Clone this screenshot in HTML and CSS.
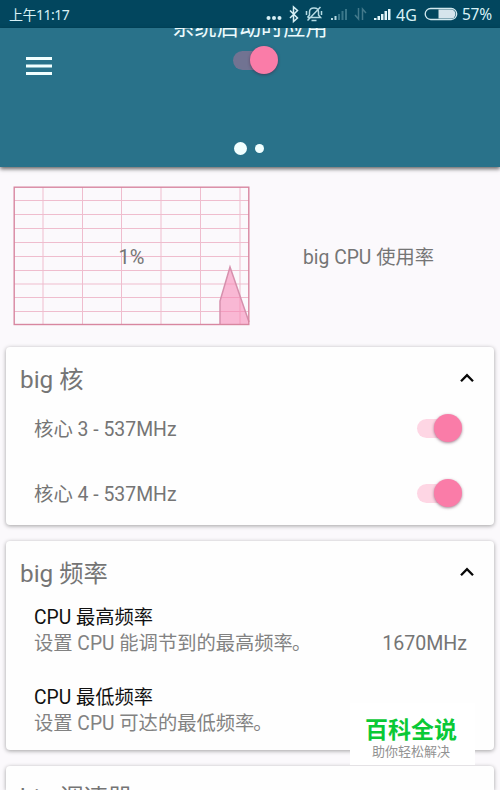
FILE: index.html
```html
<!DOCTYPE html>
<html lang="zh-CN">
<head>
<meta charset="utf-8">
<title>big CPU</title>
<link rel="stylesheet" href="styles.css">
</head>
<body>
<div class="statusbar">
  <span class="time">上午11:17</span>
  <svg class="status-icons" width="130" height="28" viewBox="264 0 130 28">
    <g fill="#d6eff5"><circle cx="268.5" cy="18" r="2"/><circle cx="274" cy="18" r="2"/><circle cx="279.500" cy="18" r="2"/></g>
    <path d="M290 10.500l7.500 7.500-4 3.500V7l4 3.500-7.500 7.500" fill="none" stroke="#d6eff5" stroke-width="1.500"/>
    <g fill="none" stroke="#b5dae3" stroke-width="1.500"><path d="M307.500 17.500h13l-2-2.500v-3q0-4-4.500-4t-4.500 4v3l-2 2.500M311.500 20.500h5M320.500 7l-13 13.500M306.500 11v4M321.500 11v4"/></g>
    <path d="M331 20v-2h2v2zM334.500 20v-4h2v4z" fill="#b5d8e1"/>
    <path d="M338 20v-6h2v6zM341.500 20v-9h2v9zM345 20V9h2v11z" fill="#39778a"/>
    <path d="M358.500 8v11l-3.500-4M362.500 20V9l3.500 4" fill="none" stroke="#42798b" stroke-width="1.500"/>
    <path d="M374 20v-2h2.500v2zM377.500 20v-4h2.500v4zM381 20v-6h2.500v6zM384.500 20v-9h2.500v9zM388 20V9h2.500v11z" fill="#e3f6fa"/>
  </svg>
  <span class="network">4G</span>
  <svg class="battery" width="34" height="14" viewBox="0 0 34 14"><rect x="1.200" y="1.500" width="31.500" height="11" rx="5.500" fill="none" stroke="#d2e9ef" stroke-width="1.300"/><path d="M14.500 2.500h12.500a4.500 4.500 0 0 1 0 9H14.500z" fill="#d6e5ec"/></svg>
  <span class="percent">57%</span>
</div>
<header class="hero">
  <svg class="menu" width="28" height="20" viewBox="0 0 28 20"><path d="M1 2.500h26M1 10h26M1 17.500h26" stroke="#f2ffff" stroke-width="2.800"/></svg>
  <div class="hero-center">
    <div class="hero-title">系统启动时应用</div>
    <span class="switch hero-switch"></span>
    <div class="pager"><i class="dot active"></i><i class="dot"></i></div>
  </div>
</header>
<main>
  <section class="usage">
    <div class="chart">
      <svg width="237" height="140" viewBox="0 0 237 140">
        <path d="M1 14.500h235M1 28.500h235M1 42.500h235M1 56.500h235M1 70.500h235M1 84.500h235M1 98h235M1 111.500h235M1 125.500h235M30 1v137M69.500 1v137M108.500 1v137M148 1v137M187.500 1v137M227 1v137" fill="none" stroke="#efbdce" stroke-width="1"/>
        <path d="M207 138.500V115L217 81l19 55v2.500z" fill="#f884b2" fill-opacity=".55"/>
        <path d="M207 138.500V115L217 81l19 55" fill="none" stroke="#d690ad" stroke-width="1.500"/>
        <rect x="1.200" y="1.200" width="234.600" height="137.300" fill="none" stroke="#d886a0" stroke-width="1.400"/>
      </svg>
      <span class="chart-value">1%</span>
    </div>
    <div class="usage-label">big CPU 使用率</div>
  </section>
  <section class="card cores">
    <div class="card-head"><h2>big 核</h2><svg class="chevron" width="16" height="10" viewBox="0 0 16 10"><path d="M2 8.200l6-6 6 6" fill="none" stroke="#080808" stroke-width="2.300"/></svg></div>
    <div class="core"><span class="core-name">核心 3 - 537MHz</span><span class="switch"></span></div>
    <div class="core"><span class="core-name">核心 4 - 537MHz</span><span class="switch"></span></div>
  </section>
  <section class="card freq">
    <div class="card-head"><h2>big 频率</h2><svg class="chevron" width="16" height="10" viewBox="0 0 16 10"><path d="M2 8.200l6-6 6 6" fill="none" stroke="#080808" stroke-width="2.300"/></svg></div>
    <div class="setting"><div class="name">CPU 最高频率</div><div class="detail"><span>设置 CPU 能调节到的最高频率<span class="stop">。</span></span><span class="value">1670MHz</span></div></div>
    <div class="setting"><div class="name">CPU 最低频率</div><div class="detail"><span>设置 CPU 可达的最低频率<span class="stop">。</span></span></div></div>
  </section>
  <section class="card governor">
    <div class="card-head"><h2>big 调速器</h2></div>
  </section>
</main>
<div class="badge"><strong>百科全说</strong><span>助你轻松解决</span></div>
</body>
</html>
```

FILE: styles.css
```css
* { box-sizing: border-box; }
body {
  position: relative;
  margin: 0;
  width: 500px;
  height: 790px;
  overflow: hidden;
  background: #fbf9fc;
  color: #757575;
  font: 19.3px/26px Roboto, "Noto Sans CJK SC", sans-serif;
  white-space: nowrap;
}
.statusbar {
  display: flex;
  align-items: center;
  height: 28px;
  padding: 0 8px 0 9px;
  background: #02465e;
  color: #d8f1f6;
  font: 14.5px/28px "Noto Sans", "Noto Sans CJK SC", sans-serif;
}
.time { flex: 1; padding-top: 1px; font-size: 14px; letter-spacing: -.5px; }
.status-icons { flex: none; }
.network { width: 22px; margin-left: 2px; padding-top: 1px; font-size: 16px; }
.battery { flex: none; margin: 0 4px 0 6px; }
.percent { width: 30px; font-size: 15.5px; letter-spacing: -.3px; }
.hero {
  position: relative;
  display: flex;
  height: 139px;
  padding-left: 25px;
  background: #29728a;
  box-shadow: 0 2px 4px rgba(0, 0, 0, .6);
}
.menu { flex: none; margin-top: 28px; }
.hero-center {
  display: flex;
  flex-direction: column;
  align-items: center;
  width: 394px;
  height: 139px;
  overflow: hidden;
}
.hero-title {
  flex: none;
  height: 22px;
  margin-top: -13px;
  color: #edfbfd;
  font-size: 22.2px;
  line-height: 24px;
}
.switch {
  position: relative;
  flex: none;
  width: 45px;
  height: 28px;
}
.switch::before {
  content: "";
  position: absolute;
  left: 0;
  top: 5px;
  width: 34px;
  height: 19px;
  border-radius: 10px;
  background: #fed6e4;
}
.switch::after {
  content: "";
  position: absolute;
  right: 0;
  top: 0;
  width: 28px;
  height: 28px;
  border-radius: 50%;
  background: #fa7ca8;
  box-shadow: 0 1px 3px rgba(80, 20, 50, .5);
}
.hero-switch { margin: 9px 0 0 11px; }
.hero-switch::before { background: #717392; }
.pager { display: flex; align-items: center; gap: 8px; margin: 68px 3px 0 0; }
.dot { width: 9px; height: 9px; border-radius: 50%; background: #f1ffff; }
.dot.active { width: 13px; height: 13px; }
main { padding: 19px 6px 0; }
.usage { display: flex; align-items: center; height: 140px; padding-left: 7px; margin-bottom: 21px; }
.chart { position: relative; width: 237px; height: 140px; }
.chart svg { display: block; }
.chart-value { position: absolute; left: 0; right: 0; top: 58px; text-align: center; font-size: 20px; }
.usage-label { flex: 1; padding: 4px 7px 0 0; text-align: center; }
.card {
  margin-bottom: 16px;
  border-radius: 4px;
  background: #fefefe;
  box-shadow: 0 1px 4px rgba(0, 0, 0, .36);
}
.cores { height: 178px; }
.freq { height: 209px; }
.governor { height: 24px; margin-bottom: 0; border-radius: 4px 4px 0 0; overflow: hidden; }
.card-head { display: flex; justify-content: space-between; height: 61px; padding: 17px 19px 0 14px; }
.card h2 { margin: 0; font-size: 24.3px; font-weight: 400; line-height: 32px; }
.governor h2 { margin-top: -1px; }
.chevron { margin-top: 9px; }
.core { display: flex; align-items: center; justify-content: space-between; height: 28px; margin: 6px 32px 37px 28px; }
.core-name { padding-top: 3px; font-size: 19.4px; }
.setting { height: 80px; padding: 2px 27px 0 28px; }
.name { color: #111; line-height: 27px; }
.detail { display: flex; justify-content: space-between; color: #828282; }
.stop { margin-left: -1px; }
.value { color: #757575; font-size: 19.6px; }
.badge {
  position: absolute;
  left: 350px;
  top: 703px;
  display: flex;
  flex-direction: column;
  align-items: center;
  width: 125px;
  height: 62px;
  padding: 10px 3px 0 0;
  background: #fff;
  font-family: "Noto Sans CJK SC", sans-serif;
}
.badge strong { color: #0ac936; font-size: 23px; line-height: 31px; }
.badge span { color: #929292; font-size: 13px; line-height: 14px; }
```
